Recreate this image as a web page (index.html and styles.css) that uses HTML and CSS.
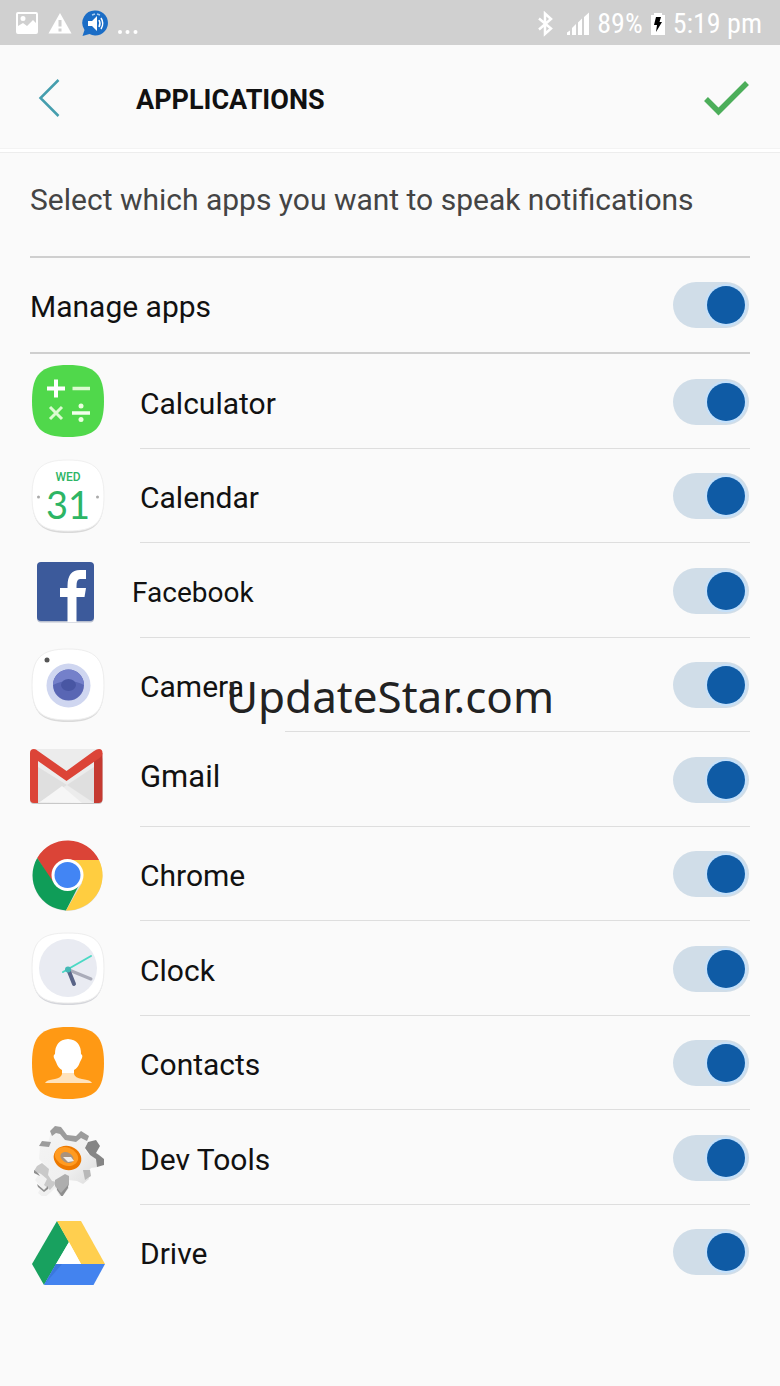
FILE: index.html
```html
<!DOCTYPE html>
<html lang="en">
<head>
<meta charset="utf-8">
<meta name="viewport" content="width=device-width, initial-scale=1">
<title>Applications</title>
<link rel="stylesheet" href="styles.css">
</head>
<body>
<div class="screen">
  <div class="status">
    <div class="status-group">
      <svg width="24" height="24" viewBox="0 0 24 24" aria-hidden="true"><path fill="#fff" fill-rule="evenodd" d="M3 1h18a2 2 0 0 1 2 2v18a2 2 0 0 1-2 2H3a2 2 0 0 1-2-2V3a2 2 0 0 1 2-2zM3 3v12l5-3 4 3 6-6 3 3V3zM8 5a2.500 2.500 0 1 1 0 5 2.500 2.500 0 0 1 0-5z"/></svg>
      <svg width="24" height="24" viewBox="0 0 24 24" aria-hidden="true"><path fill="#fff" d="M12 2L23.500 22.500H.5z"/><path d="M12 9v6.500M12 17.500v3" stroke="#d0d0d0" stroke-width="3"/></svg>
      <svg width="28" height="28" viewBox="0 0 28 28" aria-hidden="true"><path fill="#1b6dc6" d="M14.500 1.500a12.500 12.500 0 1 1-6 23.500L1.500 27l2-6A12.500 12.500 0 0 1 14.500 1.500z"/><path fill="#fff" d="M7 12h4l5-5v15l-5-5H7z"/><path fill="none" stroke="#fff" stroke-width="1.500" d="M18 11q2 3.500 0 7M20 9q3.500 5.500 0 11"/><path stroke="#a9cdf0" stroke-width="1.500" d="M11 6l3-1M16 5l3 1"/></svg>
      <svg width="20" height="28" viewBox="0 0 20 28" aria-hidden="true"><g fill="#fff"><circle cx="2" cy="23" r="2"/><circle cx="9.500" cy="23" r="2"/><circle cx="17.500" cy="23" r="2"/></g></svg>
    </div>
    <div class="status-group status-right">
      <svg class="bluetooth" width="16" height="26" viewBox="0 0 16 26" aria-hidden="true"><path fill="none" stroke="#fff" stroke-width="2.500" d="M2 7.500l12 10-6 5.500V2.500l6 5.500-12 10.500"/></svg>
      <svg width="24" height="24" viewBox="0 0 24 24" aria-hidden="true"><path fill="#fff" d="M1 23v-2.500l3-2V23zM6 23v-7l4-4v11zM12 23V10.500l4-4V23zM18 23V5L23 .5V23z"/></svg>
      <span>89%</span>
      <svg width="16" height="24" viewBox="0 0 16 24" aria-hidden="true"><path fill="#fff" d="M4 1h8v2h3v20H1V3h3z"/><path d="M6 5h5l-1.500 5H12L6 20l1-7H4z"/></svg>
      <span>5:19 pm</span>
    </div>
  </div>

  <header class="header">
    <button class="icon-button" type="button" aria-label="Back"><svg width="26" height="40" viewBox="0 0 26 40"><path fill="none" stroke="#459eae" stroke-width="2.500" d="M22.500 1L4.500 19l18 18"/></svg></button>
    <h1 class="title">APPLICATIONS</h1>
    <button class="icon-button" type="button" aria-label="Done"><svg width="46" height="38" viewBox="0 0 46 38"><path fill="none" stroke="#4cae5a" stroke-width="5.500" d="M2 19l12.500 12.500L43 3"/></svg></button>
  </header>

  <main class="content">
    <p class="intro">Select which apps you want to speak notifications</p>
    <div class="manage"><label class="label" for="all">Manage apps</label><input class="toggle" id="all" type="checkbox" checked></div>

    <ul class="apps">
      <li class="app">
        <svg class="app-icon" viewBox="0 0 76 76" aria-hidden="true"><path fill="#50d84b" d="M38 1C65 1 74 10 74 37S65 73 38 73 2 64 2 37 11 1 38 1z"/><g fill="none" stroke="#dcfbd0" stroke-width="3.500"><path stroke="#fff" stroke-width="4" d="M17 24.500h18M26 15.500v18"/><path d="M42.500 24.500H60"/><path stroke-width="3" d="M20 43l12 12M32 43L20 55"/><path stroke="#f2ffec" d="M42 49h18"/></g><g fill="#eaffdf"><circle cx="51" cy="42" r="2.500"/><circle cx="51" cy="55.500" r="2.500"/></g></svg>
        <div class="app-body"><label class="label" for="calculator">Calculator</label><input class="toggle" id="calculator" type="checkbox" checked></div>
      </li>
      <li class="app">
        <svg class="app-icon" viewBox="0 0 76 76" aria-hidden="true"><path fill="#d9d9d9" d="M38 4C65 4 74 12 74 39S65 75 38 75 2 66 2 39 11 4 38 4z"/><path fill="#fff" stroke="#f0f0f0" d="M38 2C65 2 74 11 74 38S65 73 38 73 2 65 2 38 11 2 38 2z"/><text class="cal-day" x="38" y="23">WED</text><text class="cal-date" x="38" y="61">31</text><circle cx="8.500" cy="39" r="1.500" fill="#aaa"/><circle cx="67.500" cy="39" r="1.500" fill="#aaa"/></svg>
        <div class="app-body"><label class="label" for="calendar">Calendar</label><input class="toggle" id="calendar" type="checkbox" checked></div>
      </li>
      <li class="app app-tight">
        <svg class="app-icon" viewBox="0 0 76 76" aria-hidden="true"><rect x="7" y="10" width="57" height="59.500" rx="4" fill="#b9c0d0"/><rect x="7" y="9" width="57" height="59" rx="4" fill="#3c5a9b"/><path fill="none" stroke="#fff" stroke-width="9" d="M42 69V33Q42 21.500 50 21.500h6"/><path fill="#fff" d="M30 35h26l-1.500 9H30z"/></svg>
        <div class="app-body"><label class="label" for="facebook">Facebook</label><input class="toggle" id="facebook" type="checkbox" checked></div>
      </li>
      <li class="app app-camera">
        <svg class="app-icon" viewBox="0 0 76 76" aria-hidden="true"><path fill="#dadada" d="M38 4C65 4 74 12 74 39S65 75 38 75 2 66 2 39 11 4 38 4z"/><path fill="#fff" stroke="#eee" d="M38 2C65 2 74 11 74 38S65 73 38 73 2 65 2 38 11 2 38 2z"/><circle cx="17" cy="13" r="2.500" fill="#555"/><circle cx="38.500" cy="38.500" r="22" fill="#cfd6f0"/><circle cx="38.500" cy="38" r="15.500" fill="#5966b4"/><path fill="#7480ca" d="M23 38a15.500 15.500 0 0 1 31 0q-15.500-8-31 0z"/><ellipse cx="38.500" cy="38" rx="7.500" ry="6" fill="#4856a3"/></svg>
        <div class="app-body"><label class="label" for="camera">Camera</label><input class="toggle" id="camera" type="checkbox" checked></div>
      </li>
      <li class="app app-gmail">
        <svg class="app-icon" viewBox="0 0 76 76" aria-hidden="true"><rect y="14" width="72.500" height="48" rx="4" fill="#c8c8c8"/><path fill="#ececec" d="M5 7h63v54H5z"/><path fill="#dfdfdf" d="M8 25l29 18 27-18v36L37 43 8 61z"/><path fill="#f6f6f6" d="M10 60l22-16 20 17z"/><path fill="#c53a31" d="M64 17l8.500-6v46a4 4 0 0 1-4 4H64z"/><path fill="#dc4437" d="M0 11q0-4 4-4 2 0 4 2l28.500 20L64 9q3-2 5-2 3.500 0 3.500 4 0 3-3 5L36.500 39 8 19v42H4a4 4 0 0 1-4-4z"/></svg>
        <div class="app-body"><label class="label" for="gmail">Gmail</label><input class="toggle" id="gmail" type="checkbox" checked></div>
      </li>
      <li class="app">
        <svg class="app-icon" viewBox="0 0 76 76" aria-hidden="true"><circle cx="37.500" cy="40" r="35" fill="#ddd"/><path fill="#db4437" d="M7.200 22A35 35 0 0 1 69 24H37.500L23 48z"/><path fill="#0f9d58" d="M7.200 22L24 47l14 7 12-7-14 27.400A35 35 0 0 1 7.200 22z"/><path fill="#ffcd40" d="M37.500 24H69A35 35 0 0 1 36 74.400L52 47z"/><circle cx="37.500" cy="39" r="16" fill="#fff"/><circle cx="37.500" cy="39" r="13" fill="#4285f4"/></svg>
        <div class="app-body"><label class="label" for="chrome">Chrome</label><input class="toggle" id="chrome" type="checkbox" checked></div>
      </li>
      <li class="app">
        <svg class="app-icon" viewBox="0 0 76 76" aria-hidden="true"><path fill="#d5d6db" d="M38 3C65 3 74 11 74 38S65 74 38 74 2 65 2 38 11 3 38 3z"/><path fill="#fff" stroke="#eee" d="M38 2C65 2 74 10 74 37S65 72 38 72 2 64 2 37 11 2 38 2z"/><circle cx="38" cy="37" r="29" fill="#e9ebf2"/><g fill="none" stroke-linecap="round"><path stroke="#aaacb9" stroke-width="3" d="M39 39l22 9"/><path stroke="#596487" stroke-width="4" d="M38 38l6 15"/><path stroke="#4bd9c4" stroke-width="2" d="M33 41l28-16"/></g><circle cx="38" cy="38.500" r="3" fill="#45b9b6"/></svg>
        <div class="app-body"><label class="label" for="clock">Clock</label><input class="toggle" id="clock" type="checkbox" checked></div>
      </li>
      <li class="app">
        <svg class="app-icon" viewBox="0 0 76 76" aria-hidden="true"><path fill="#ff9914" d="M38 2C65 2 74 11 74 38S65 74 38 74 2 65 2 38 11 2 38 2z"/><path fill="#ffe3bd" d="M32 46h12v3q1 4 8 5 9 1 10 4H15q1-3 10-4 6-1 7-5z"/><path fill="#fff" d="M38 14q13 1 13 15 2 1 1 4l-2 4q-2 6-6 8v3H32v-3q-4-2-6-8l-2-4q-1-3 1-4 0-14 13-15z"/></svg>
        <div class="app-body"><label class="label" for="contacts">Contacts</label><input class="toggle" id="contacts" type="checkbox" checked></div>
      </li>
      <li class="app">
        <svg class="app-icon" viewBox="0 0 76 76" aria-hidden="true">
          <defs><linearGradient id="metal" x1="0" y1="0" x2="1" y2="1"><stop stop-color="#f4f4f4"/><stop offset=".55" stop-color="#f0f0f0"/><stop offset="1" stop-color="#d5d5d5"/></linearGradient></defs>
          <path fill="url(#metal)" d="M21 12l5-5 6 1 5 7 9 1 5-5 8 6-2 6-2 7 4 5 10 3-1 9-7 1-4 5 2 6-6 5-6-3-9-1 1 8-8 10-6-10-4 4-7 6-6-5 3-6-6-7 3-5 6-3 1-7-6-6 1-12 7-1z"/>
          <path fill="#9c9c9c" d="M20 11l5-5 6 1 6 8 9 1 5-5 8 5-2 5-6-3-5 4-11-2-5-6-4-1-4 3zM9 26l3-5 9 1-2 5z"/>
          <path fill="#858585" d="M55 28l3-6 8-2 4 6-4 7 3 2 5 4v6l-7 2-1-8-6-4z"/>
          <path fill="#b8b8b8" d="M53 50l7 0 1 6-6 4z"/>
          <path fill="#c9c9c9" d="M4 51l3-5 5-3 7 6-1 6 4 6 5 1-7 8-6-5 3-6-6-5z"/>
          <path fill="#aeaeae" d="M25 60l10-6 4 2 0 9-8 9-6-8z"/>
          <path fill="#8e8e8e" d="M4 50v3l6 3-2-3zM7 64l7 6 4-4v3l-4 3-6-5zM27 68l4 5 7-8v3l-6 9-5-7z"/>
          <ellipse cx="37.500" cy="38" rx="14" ry="12" transform="rotate(20 37.500 38)" fill="#ed7900"/>
          <ellipse cx="36.500" cy="36.500" rx="12" ry="9" transform="rotate(20 36.500 36.500)" fill="#ff9b21"/>
          <ellipse cx="37" cy="37.500" rx="7" ry="5" transform="rotate(30 37 37.500)" fill="#a9927c"/>
          <path fill="#eee" d="M33 37l8 0 3 4-6 1z"/>
        </svg>
        <div class="app-body"><label class="label" for="devtools">Dev Tools</label><input class="toggle" id="devtools" type="checkbox" checked></div>
      </li>
      <li class="app">
        <svg class="app-icon" viewBox="0 0 76 76" aria-hidden="true"><path fill="#18a15f" d="M27 7l12 21-25 43L2 50z"/><path fill="#ffcf4f" d="M27 7h24l24 43H51z"/><path fill="#4383ef" d="M26 50h49L63.500 71H14z"/><path fill="#3a77dd" d="M26 50h6L14 71z"/><path fill="#fff" d="M39 28l12 22H26z"/></svg>
        <div class="app-body"><label class="label" for="drive">Drive</label><input class="toggle" id="drive" type="checkbox" checked></div>
      </li>
    </ul>
  </main>
  <div class="watermark">UpdateStar.com</div>
</div>
</body>
</html>
```
FILE: styles.css
```css
* { box-sizing: border-box; }

body {
  margin: 0;
  background: #fafafa;
  color: #111;
  font-family: Roboto, "Liberation Sans", sans-serif;
}

.screen {
  position: relative;
  min-height: 100vh;
}

.status {
  display: flex;
  align-items: center;
  justify-content: space-between;
  height: 45px;
  padding: 0 18px 0 15px;
  background: #d0d0d0;
  color: #fff;
  font-family: "Roboto Condensed", Roboto, sans-serif;
  font-size: 28px;
  line-height: 32px;
}

.status-group {
  display: flex;
  align-items: center;
  gap: 9px;
}

.status-right {
  gap: 7px;
  padding-top: 2px;
}

.bluetooth { margin-right: 6px; }

.header {
  display: flex;
  align-items: center;
  height: 108px;
  padding: 0 30px 0 36px;
  border-bottom: 1px solid #ededed;
  box-shadow: inset 0 -3px #fff, inset 0 -4px #f3f3f3;
}

.icon-button {
  display: flex;
  padding: 0;
  border: 0;
  background: none;
}

.title {
  flex: 1;
  margin: 0 0 0 74px;
  padding-top: 2px;
  font-size: 27px;
  font-weight: 700;
  line-height: 32px;
}

.content { padding: 0 30px; }

.intro {
  margin: 0;
  padding: 27px 0 36px;
  border-bottom: 2px solid #cfcfcf;
  color: #444;
  font-size: 30px;
  line-height: 40px;
}

.manage {
  display: flex;
  align-items: center;
  justify-content: space-between;
  height: 96px;
  border-bottom: 2px solid #cfcfcf;
}

.label {
  padding-top: 4px;
  font-size: 30px;
  line-height: 40px;
}

.apps {
  margin: 0;
  padding: 0;
  list-style: none;
}

.app {
  display: flex;
  align-items: center;
  gap: 34px;
  height: 95px;
}

.app:nth-child(even) { height: 94px; }

.app-icon {
  flex: none;
  width: 76px;
  height: 76px;
}

.app-body {
  display: flex;
  flex: 1;
  align-items: center;
  align-self: stretch;
  justify-content: space-between;
  background: linear-gradient(#dedede, #dedede) no-repeat right bottom / 100% 1px;
}

.app:last-child .app-body { background: none; }
.app-camera .app-body { background-size: calc(100% - 145px) 1px; }

.app-tight .label {
  margin-left: -8px;
  font-size: 28px;
}

.app-gmail .label {
  padding: 0 0 6px;
  font-size: 31px;
}

.toggle {
  display: flex;
  align-items: center;
  justify-content: flex-start;
  width: 76px;
  height: 46px;
  margin: 0 1px 0 0;
  padding: 0 4px;
  border-radius: 23px;
  background: #d0dde8;
  appearance: none;
}

.toggle::before {
  content: "";
  width: 38px;
  height: 38px;
  border-radius: 50%;
  background: #0f5ba5;
  box-shadow: 0 0 0 2px #c4e0fa;
}

.toggle:checked { justify-content: flex-end; }

.cal-day,
.cal-date {
  fill: #2db565;
  text-anchor: middle;
}

.cal-day {
  font-size: 12px;
  font-weight: 500;
}

.cal-date {
  font-family: Lato, sans-serif;
  font-size: 38px;
}

.watermark {
  position: absolute;
  inset: 0;
  display: grid;
  place-items: center;
  padding-top: 6px;
  color: #222;
  font-family: "Noto Sans", "Open Sans", sans-serif;
  font-size: 44px;
  line-height: 60px;
  pointer-events: none;
}
```
